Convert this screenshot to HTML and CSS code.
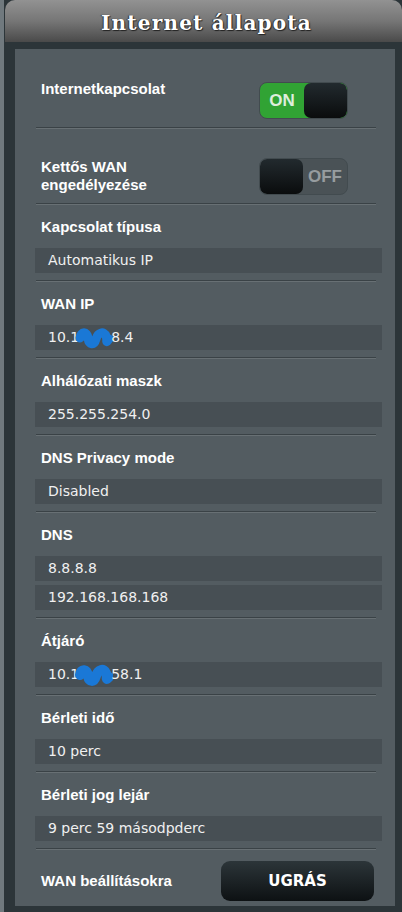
FILE: index.html
```html
<!DOCTYPE html>
<html>
<head>
<meta name="viewport" content="width=device-width, initial-scale=1">
<title>Internet állapota</title>
<link rel="stylesheet" href="styles.css">
</head>
<body>

<div class="frame">
  <div class="header">
    <h1 class="title">Internet állapota</h1>
  </div>

  <div class="panel">

    <div class="switchRow first">
      <span class="label">Internetkapcsolat</span>
      <span class="toggle on">
        <span class="toggleText">ON</span>
        <span class="knob"></span>
      </span>
    </div>
    <div class="divider"></div>

    <div class="switchRow second">
      <span class="label">Kettős WAN<br>engedélyezése</span>
      <span class="toggle off">
        <span class="knob"></span>
        <span class="toggleText">OFF</span>
      </span>
    </div>
    <div class="divider"></div>

    <div class="section">
      <div class="label">Kapcsolat típusa</div>
      <div class="value">Automatikus IP</div>
    </div>
    <div class="divider"></div>

    <div class="section">
      <div class="label">WAN IP</div>
      <div class="value">10.1<svg class="scribble" width="38" height="24" viewBox="0 0 38 24"><path d="M5 12 C6 5 12 5 13 12 C14 19 19 20 21 13 C23 6 29 5 31 10 C33 15 30 18 34 13" fill="none" stroke="#1a78d6" stroke-width="9" stroke-linecap="round" stroke-linejoin="round"/></svg>8.4</div>
    </div>
    <div class="divider"></div>

    <div class="section">
      <div class="label">Alhálózati maszk</div>
      <div class="value">255.255.254.0</div>
    </div>
    <div class="divider"></div>

    <div class="section">
      <div class="label">DNS Privacy mode</div>
      <div class="value">Disabled</div>
    </div>
    <div class="divider"></div>

    <div class="section">
      <div class="label">DNS</div>
      <div class="value">8.8.8.8</div>
      <div class="value">192.168.168.168</div>
    </div>
    <div class="divider"></div>

    <div class="section">
      <div class="label">Átjáró</div>
      <div class="value">10.1<svg class="scribble" width="38" height="24" viewBox="0 0 38 24"><path d="M5 12 C6 5 12 6 13 13 C14 19 19 20 21 13 C23 6 29 5 31 10 C33 15 30 18 34 14" fill="none" stroke="#1a78d6" stroke-width="10" stroke-linecap="round" stroke-linejoin="round"/></svg>58.1</div>
    </div>
    <div class="divider"></div>

    <div class="section">
      <div class="label">Bérleti idő</div>
      <div class="value">10 perc</div>
    </div>
    <div class="divider"></div>

    <div class="section">
      <div class="label">Bérleti jog lejár</div>
      <div class="value">9 perc 59 másodpderc</div>
    </div>
    <div class="divider"></div>

    <div class="buttonRow">
      <span class="label">WAN beállításokra</span>
      <button class="goButton">UGRÁS</button>
    </div>

  </div>
</div>

</body>
</html>
```

FILE: styles.css
```css
body {
    margin: 0;
    background-color: rgb(44, 53, 57);
    font-family: "Liberation Sans", Arial, sans-serif;
}

.frame {
    width: 402px;
    height: 912px;
    box-sizing: border-box;
    border-left: 4px solid rgb(112, 121, 126);
    padding: 0 7px 0 11px;
    background-color: rgb(44, 53, 57);
    overflow: hidden;
}

.header {
    height: 42px;
    margin: 0 -7px 7px -10px;
    border-radius: 10px 10px 0 0;
    background: linear-gradient(to bottom, rgb(146, 146, 146) 0%, rgb(118, 118, 118) 50%, rgb(74, 74, 74) 100%);
    display: flex;
    align-items: center;
    justify-content: center;
}

.title {
    margin: 3px 0 0 6px;
    font-family: "DejaVu Serif", "Liberation Serif", serif;
    font-size: 20px;
    letter-spacing: 1.2px;
    color: white;
    text-shadow: 1px 1px 1px #222, -1px 0 1px #333;
}

.panel {
    background-color: rgb(83, 92, 97);
    padding: 0 13px 5px 20px;
}

.label {
    display: block;
    padding-left: 6px;
    color: white;
    font-weight: bold;
    font-size: 15px;
    line-height: 18px;
}

.switchRow {
    display: flex;
    justify-content: space-between;
    align-items: flex-start;
    padding-right: 34px;
}

.switchRow.first {
    padding-top: 33px;
    padding-bottom: 8px;
}

.switchRow.first .label {
    margin-top: -2px;
}

.switchRow.second {
    padding-top: 29px;
    padding-bottom: 8px;
}

.toggle {
    width: 87px;
    height: 35px;
    border: 1px solid rgb(66, 75, 79);
    border-radius: 8px;
    display: flex;
    overflow: hidden;
}

.toggle.on {
    background-color: rgb(49, 163, 52);
}

.toggle.off {
    background-color: rgb(74, 82, 86);
}

.toggleText {
    flex: 1;
    display: flex;
    align-items: center;
    justify-content: center;
    font-weight: bold;
    font-size: 17px;
}

.on .toggleText {
    color: rgb(222, 238, 220);
}

.off .toggleText {
    color: rgb(150, 156, 159);
}

.knob {
    width: 43px;
    border-radius: 7px;
    background: linear-gradient(to bottom, rgb(34, 42, 46), rgb(10, 12, 13));
}

.divider {
    height: 1px;
    margin: 0 6px 1px 1px;
    background-color: rgb(58, 66, 70);
    box-shadow: 0 1px 0 rgb(104, 112, 116);
}

.section {
    padding: 13px 0 7px 0;
}

.section .label {
    margin-bottom: 12px;
}

.value {
    height: 25px;
    line-height: 25px;
    padding-left: 13px;
    background-color: rgb(71, 79, 84);
    color: rgb(240, 240, 240);
    font-family: "DejaVu Sans", Verdana, sans-serif;
    font-size: 14px;
    display: flex;
    align-items: center;
}

.value + .value {
    margin-top: 4px;
}

.scribble {
    margin: 0 -2px 0 -4px;
}

.buttonRow {
    display: flex;
    align-items: center;
    justify-content: space-between;
    padding: 11px 8px 0 0;
}

.goButton {
    width: 153px;
    height: 40px;
    border: none;
    border-radius: 9px;
    background: linear-gradient(to bottom, rgb(44, 53, 57), rgb(13, 17, 19));
    color: white;
    font-family: "DejaVu Sans", Verdana, sans-serif;
    font-weight: bold;
    font-size: 15px;
}
```
